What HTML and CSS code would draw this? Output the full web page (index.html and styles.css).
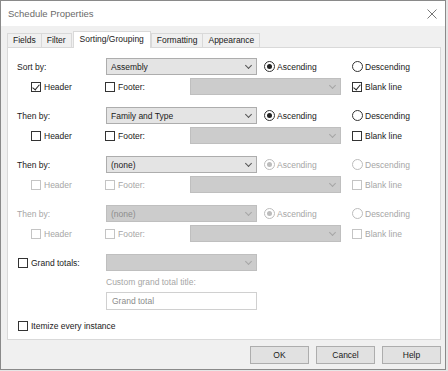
FILE: index.html
```html
<!DOCTYPE html>
<html lang="en">
<head>
    <meta charset="UTF-8">
    <title>Schedule Properties</title>
    <link rel="stylesheet" href="styles.css">
</head>
<body>

<div class="window">
    <div class="titlebar">
        <span class="title">Schedule Properties</span>
        <svg class="close" width="10" height="10" viewBox="0 0 10 10"><path d="M0.5 0.5L9.5 9.5M9.5 0.5L0.5 9.5" stroke="#777" stroke-width="1"/></svg>
    </div>

    <div class="content">
        <div class="tabs">
            <div class="tab">Fields</div>
            <div class="tab">Filter</div>
            <div class="tab active">Sorting/Grouping</div>
            <div class="tab">Formatting</div>
            <div class="tab">Appearance</div>
        </div>

        <div class="panel">
            <!-- Sort by -->
            <div class="group">
                <div class="row">
                    <span class="label">Sort by:</span>
                    <div class="select main"><span>Assembly</span><i class="chev"></i></div>
                    <div class="radio asc checked"><span class="circle"></span>Ascending</div>
                    <div class="radio"><span class="circle"></span>Descending</div>
                </div>
                <div class="row sub">
                    <div class="check header checked"><span class="box"></span>Header</div>
                    <div class="check footer"><span class="box"></span>Footer:</div>
                    <div class="select disabled footer-select"><i class="chev"></i></div>
                    <div class="check checked"><span class="box"></span>Blank line</div>
                </div>
            </div>

            <!-- Then by 1 -->
            <div class="group">
                <div class="row">
                    <span class="label">Then by:</span>
                    <div class="select main"><span>Family and Type</span><i class="chev"></i></div>
                    <div class="radio asc checked"><span class="circle"></span>Ascending</div>
                    <div class="radio"><span class="circle"></span>Descending</div>
                </div>
                <div class="row sub">
                    <div class="check header"><span class="box"></span>Header</div>
                    <div class="check footer"><span class="box"></span>Footer:</div>
                    <div class="select disabled footer-select"><i class="chev"></i></div>
                    <div class="check"><span class="box"></span>Blank line</div>
                </div>
            </div>

            <!-- Then by 2 -->
            <div class="group">
                <div class="row">
                    <span class="label">Then by:</span>
                    <div class="select main"><span>(none)</span><i class="chev"></i></div>
                    <div class="radio asc checked off"><span class="circle"></span>Ascending</div>
                    <div class="radio off"><span class="circle"></span>Descending</div>
                </div>
                <div class="row sub">
                    <div class="check header off"><span class="box"></span>Header</div>
                    <div class="check footer off"><span class="box"></span>Footer:</div>
                    <div class="select disabled footer-select"><i class="chev"></i></div>
                    <div class="check off"><span class="box"></span>Blank line</div>
                </div>
            </div>

            <!-- Then by 3 (disabled) -->
            <div class="group">
                <div class="row">
                    <span class="label off">Then by:</span>
                    <div class="select main disabled"><span>(none)</span><i class="chev"></i></div>
                    <div class="radio asc checked off"><span class="circle"></span>Ascending</div>
                    <div class="radio off"><span class="circle"></span>Descending</div>
                </div>
                <div class="row sub">
                    <div class="check header off"><span class="box"></span>Header</div>
                    <div class="check footer off"><span class="box"></span>Footer:</div>
                    <div class="select disabled footer-select"><i class="chev"></i></div>
                    <div class="check off"><span class="box"></span>Blank line</div>
                </div>
            </div>

            <div class="row">
                <div class="check label grand"><span class="box"></span>Grand totals:</div>
                <div class="select main disabled"><i class="chev"></i></div>
            </div>
            <div class="caption">Custom grand total title:</div>
            <div class="textbox">Grand total</div>

            <div class="row itemize">
                <div class="check grand"><span class="box"></span>Itemize every instance</div>
            </div>
        </div>

        <div class="buttons">
            <div class="button">OK</div>
            <div class="button">Cancel</div>
            <div class="button">Help</div>
        </div>
    </div>
</div>

</body>
</html>
```

FILE: styles.css
```css
* {
    margin: 0;
    padding: 0;
    box-sizing: border-box;
}

body {
    font-family: 'Liberation Sans', Arial, sans-serif;
    font-size: 8.5px;
    color: #1a1a1a;
    background-color: #e6e6e6;
    width: 448px;
    height: 371px;
    overflow: hidden;
}

.window {
    width: 446px;
    height: 370px;
    border: 1px solid #8a8a8a;
    background-color: #f0f0f0;
}

.titlebar {
    height: 25px;
    background-color: #fff;
    display: flex;
    align-items: center;
    justify-content: space-between;
    padding: 0 8px 0 7px;
}

.title {
    font-size: 9.5px;
    color: #6a6a6a;
}

.content {
    padding: 5px 4px 0 6px;
}

/* tabs */
.tabs {
    display: flex;
    align-items: flex-end;
    height: 16px;
    position: relative;
    z-index: 1;
}

.tab {
    height: 14px;
    line-height: 13px;
    padding: 0 5px;
    border: 1px solid #d9d9d9;
    border-bottom: none;
    margin-right: -1px;
    background-color: #f0f0f0;
}

.tab.active {
    height: 17px;
    margin-bottom: -1px;
    margin-left: 2px;
    margin-right: 0;
    padding: 0 6px;
    line-height: 14px;
    background-color: #fff;
}

.panel {
    height: 293px;
    background-color: #fff;
    border: 1px solid #d9d9d9;
    padding: 10px 0 0 9px;
}

/* rows */
.group {
    margin-bottom: 12px;
}

.row {
    display: flex;
    align-items: center;
    height: 17px;
}

.row.sub {
    margin-top: 3px;
    padding-left: 14px;
}

.label {
    width: 89px;
}

.off {
    color: #a6a6a6;
}

/* combo boxes */
.select {
    height: 17px;
    display: flex;
    align-items: center;
    padding: 0 5px 0 4px;
    background-color: #e4e4e4;
    border: 1px solid #adadad;
}

.select.main {
    width: 151px;
    margin-right: 7px;
}

.select.disabled {
    background-color: #cccccc;
    border-color: #bfbfbf;
    color: #8c8c8c;
}

.footer-select {
    width: 151px;
    margin-right: 11px;
}

.chev {
    width: 5px;
    height: 5px;
    margin-left: auto;
    border-right: 1px solid #555;
    border-bottom: 1px solid #555;
    transform: rotate(45deg);
    margin-top: -3px;
}

.select.disabled .chev {
    border-color: #a6a6a6;
}

/* radio buttons */
.radio {
    display: flex;
    align-items: center;
}

.radio.asc {
    width: 88px;
}

.circle {
    width: 11px;
    height: 11px;
    border: 1px solid #333;
    border-radius: 50%;
    margin-right: 2px;
    display: flex;
    align-items: center;
    justify-content: center;
}

.radio.checked .circle::after {
    content: "";
    width: 5px;
    height: 5px;
    border-radius: 50%;
    background-color: #222;
}

.radio.off .circle {
    border-color: #bcbcbc;
}

.radio.off.checked .circle::after {
    background-color: #bcbcbc;
}

/* check boxes */
.check {
    display: flex;
    align-items: center;
}

.check.grand {
    padding-left: 1px;
}

.check.header {
    width: 74px;
}

.check.footer {
    width: 85px;
}

.box {
    width: 10px;
    height: 10px;
    border: 1px solid #333;
    margin-right: 3px;
    position: relative;
}

.check.checked .box::after {
    content: "";
    position: absolute;
    left: 2px;
    top: 0px;
    width: 3px;
    height: 6px;
    border-right: 1px solid #222;
    border-bottom: 1px solid #222;
    transform: rotate(40deg);
}

.check.off .box {
    border-color: #c4c4c4;
}

/* grand totals */
.caption {
    margin: 5px 0 0 89px;
    height: 12px;
    line-height: 12px;
    color: #a6a6a6;
}

.textbox {
    margin: 4px 0 0 89px;
    width: 151px;
    height: 18px;
    line-height: 16px;
    padding-left: 5px;
    border: 1px solid #d0d0d0;
    color: #8c8c8c;
}

.row.itemize {
    margin-top: 7px;
}

/* dialog buttons */
.buttons {
    display: flex;
    justify-content: flex-end;
    gap: 7px;
    margin-top: 6px;
}

.button {
    width: 59px;
    height: 18px;
    line-height: 16px;
    text-align: center;
    background-color: #e1e1e1;
    border: 1px solid #adadad;
}
```
